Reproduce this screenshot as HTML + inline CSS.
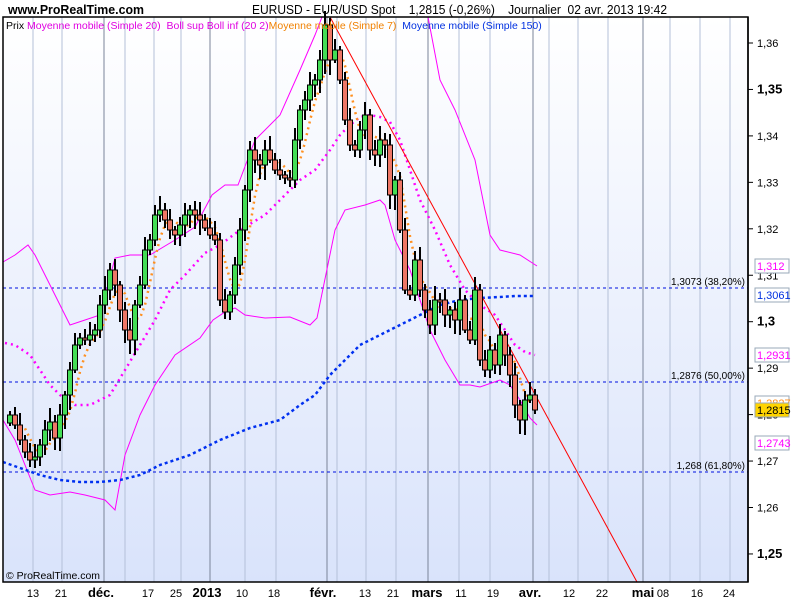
<!DOCTYPE html>
<html><head><meta charset="utf-8"><style>
body{margin:0;width:800px;height:600px;overflow:hidden;background:#fff;font-family:"Liberation Sans",sans-serif}
svg text{font-family:"Liberation Sans",sans-serif}
</style></head><body>
<svg id="s" width="800" height="600" xmlns="http://www.w3.org/2000/svg">
<defs><linearGradient id="g" x1="0" y1="0" x2="0" y2="1"><stop offset="0" stop-color="#ffffff"/><stop offset="1" stop-color="#d9e3fb"/></linearGradient></defs>
<rect x="0" y="0" width="800" height="600" fill="#fff"/>
<rect x="3" y="17" width="745" height="565" fill="url(#g)"/>
<g id="grid"></g>
<g id="lines"></g>
<g id="candles"></g>
<rect x="3" y="17" width="745" height="565" fill="none" stroke="#000" stroke-width="1.5"/>
<text x="8" y="14" font-size="13" font-weight="bold" textLength="136" lengthAdjust="spacingAndGlyphs">www.ProRealTime.com</text>
<text x="252" y="14" font-size="13" textLength="415" lengthAdjust="spacingAndGlyphs">EURUSD - EUR/USD Spot&#160;&#160;&#160; 1,2815 (-0,26%)&#160;&#160;&#160; Journalier&#160; 02 avr. 2013 19:42</text>
<text x="6" y="29" font-size="10.5"><tspan fill="#000">Prix </tspan><tspan fill="#e000e0">Moyenne mobile (Simple 20)&#160; Boll sup Boll inf (20 2)</tspan><tspan fill="#f08000">Moyenne mobile (Simple 7)</tspan><tspan fill="#0030e0">&#160; Moyenne mobile (Simple 150)</tspan></text>
<text x="6" y="579" font-size="10.5" textLength="94" lengthAdjust="spacingAndGlyphs">© ProRealTime.com</text>
<g id="axis" font-size="11"></g>
</svg>
<script>
var NS="http://www.w3.org/2000/svg",s=document.getElementById('s');
function el(p,t,a,txt){var e=document.createElementNS(NS,t);for(var k in a)e.setAttribute(k,a[k]);if(txt!==undefined)e.textContent=txt;document.getElementById(p).appendChild(e);return e;}
var light=[33,62,125,154,181,245,276,337,366,396,459,490,549,578,608,670,700,730],dark=[104,210,327,428,533,643];
light.forEach(function(x){el('grid','line',{x1:x,y1:17,x2:x,y2:582,stroke:'#b4c0d8','stroke-width':1});});
dark.forEach(function(x){el('grid','line',{x1:x,y1:17,x2:x,y2:582,stroke:'#7a8499','stroke-width':1});});
[[288,'1,3073 (38,20%)'],[382,'1,2876 (50,00%)'],[472,'1,268 (61,80%)']].forEach(function(f){
el('grid','line',{x1:3,y1:f[0],x2:748,y2:f[0],stroke:'#0010e0','stroke-dasharray':'3,3','stroke-width':1});
el('grid','text',{x:745,y:f[0]-3,'text-anchor':'end','font-size':10},f[1]);});
function pl(pts,c,w,d){el('lines','polyline',{points:pts.map(function(p){return p.join(',')}).join(' '),fill:'none',stroke:c,'stroke-width':w,'stroke-dasharray':d||''});}
pl([[3,262],[15,255],[28,245],[35,255],[50,285],[70,325],[85,320],[100,315],[115,258],[130,255],[150,255],[175,240],[195,227],[212,195],[225,185],[238,185],[255,140],[280,115],[300,70],[315,35],[322,17]],'#ff00ff',1);
pl([[428,17],[440,80],[455,110],[475,160],[490,235],[500,250],[520,255],[537,266]],'#ff00ff',1);
pl([[3,420],[15,440],[35,490],[50,495],[70,492],[85,495],[105,500],[115,510],[125,455],[140,415],[155,385],[175,355],[200,338],[213,320],[225,312],[235,308],[245,315],[265,318],[290,317],[310,325],[317,318],[335,230],[345,210],[365,205],[380,200],[385,205],[395,240],[410,270],[420,300],[430,330],[445,360],[460,385],[470,385],[480,387],[500,380],[510,385],[520,400],[530,418],[537,425]],'#ff00ff',1);
pl([[5,343],[15,345],[30,355],[50,385],[60,395],[75,405],[90,405],[100,400],[110,395],[125,370],[140,345],[155,320],[170,290],[185,275],[205,253],[220,245],[240,230],[265,215],[280,200],[300,180],[315,170],[330,150],[340,135],[350,125],[360,117],[370,115],[380,117],[390,122],[400,140],[410,170],[420,200],[435,230],[450,265],[465,290],[480,305],[495,315],[505,330],[515,345],[525,352],[535,355]],'#ff00ff',2.5,'2,4');
pl([[3,462],[20,468],[40,475],[60,480],[80,482],[100,482],[120,480],[140,475],[160,465],[190,455],[220,440],[250,428],[280,420],[300,405],[315,395],[330,375],[345,360],[360,345],[380,335],[400,325],[420,315],[440,305],[460,300],[480,298],[500,297],[515,296],[535,296]],'#0030f0',2.5,'3,3');
el('lines','line',{x1:330,y1:17,x2:637,y2:582,stroke:'#ff0000','stroke-width':1});
var c=[[10,415],[15,425],[20,440],[25,452],[30,460],[35,457],[40,445],[45,430],[50,422],[55,438],[60,415],[65,395],[70,370],[75,345],[80,338],[85,340],[90,335],[95,330],[100,305],[105,290],[110,270],[115,285],[120,310],[125,330],[130,340],[135,305],[140,285],[145,250],[150,240],[155,215],[160,210],[165,220],[170,230],[175,235],[180,225],[185,215],[190,210],[195,215],[200,220],[205,228],[210,235],[215,240],[220,300],[225,312],[230,295],[235,265],[240,230],[245,190],[250,150],[255,160],[260,165],[265,150],[270,160],[275,170],[280,175],[285,178],[290,180],[295,140],[300,110],[305,100],[310,85],[315,80],[320,60],[325,25],[330,60],[335,50],[340,80],[345,120],[350,145],[355,150],[360,130],[365,115],[370,150],[375,155],[380,140],[385,145],[390,195],[395,180],[400,230],[405,290],[410,295],[415,260],[420,290],[425,310],[430,325],[435,300],[440,300],[445,315],[450,310],[455,320],[460,300],[465,330],[470,340],[475,290],[480,360],[485,370],[490,350],[495,365],[500,335],[505,355],[510,375],[515,405],[520,420],[525,400],[530,395],[535,410]];
var prev=c[0][1]+8,ma=[];
c.forEach(function(d,i){var x=d[0],o=prev,cl=d[1];var top=Math.min(o,cl),bot=Math.max(o,cl);if(bot-top<2)bot=top+2;
var r1=(i*37%11)+4,r2=(i*53%13)+3;
el('candles','line',{x1:x,y1:top-r1,x2:x,y2:bot+r2,stroke:'#000','stroke-width':2});
el('candles','rect',{x:x-2.5,y:top,width:5,height:bot-top,fill:cl<o?'#44dd55':'#ee7766',stroke:'#000','stroke-width':1});
prev=cl;ma.push(cl);});
var mp=[];for(var i=3;i<c.length;i++){var a=0;for(var j=i-3;j<=i;j++)a+=(ma[j]+(j>0?ma[j-1]:ma[j]))/2;mp.push([c[i][0],a/4]);}
pl(mp,'#ff9020',2.5,'2,4');
el('axis','rect',{x:749,y:17,width:51,height:583,fill:'#fff'});
el('axis','line',{x1:748,y1:17,x2:748,y2:582,stroke:'#000','stroke-width':1.5});
var lb=['1,36','1,35','1,34','1,33','1,32','1,31','1,3','1,29','1,28','1,27','1,26','1,25'];
lb.forEach(function(t,n){var y=43+n*46.45;var b=(n==1||n==6||n==11);el('axis','line',{x1:748,y1:y,x2:753,y2:y,stroke:'#000'});el('axis','text',{x:757,y:y+4,'font-size':b?13:11,'font-weight':b?'bold':'normal'},t);});
[[266,'1,312','#ff00ff','#fff'],[295,'1,3061','#0030e0','#fff'],[355,'1,2931','#ff00ff','#fff'],[403,'1,2827','#ff9020','#fff'],[410,'1,2815','#000','#ffd400'],[443,'1,2743','#ff00ff','#fff']].forEach(function(b){
el('axis','rect',{x:755,y:b[0]-7,width:34,height:14,fill:b[3],stroke:'#9aa8b8'});el('axis','text',{x:757,y:b[0]+4,fill:b[2],'font-size':11},b[1]);});
[[33,'13'],[61,'21'],[101,'déc.',1],[148,'17'],[176,'25'],[207,'2013',1],[242,'10'],[274,'18'],[323,'févr.',1],[365,'13'],[393,'21'],[427,'mars',1],[461,'11'],[493,'19'],[530,'avr.',1],[569,'12'],[602,'22'],[643,'mai',1],[663,'08'],[697,'16'],[729,'24']].forEach(function(t){
el('axis','text',{x:t[0],y:597,'text-anchor':'middle','font-size':t[2]?13:11,'font-weight':t[2]?'bold':'normal'},t[1]);});
</script>
</body></html>
